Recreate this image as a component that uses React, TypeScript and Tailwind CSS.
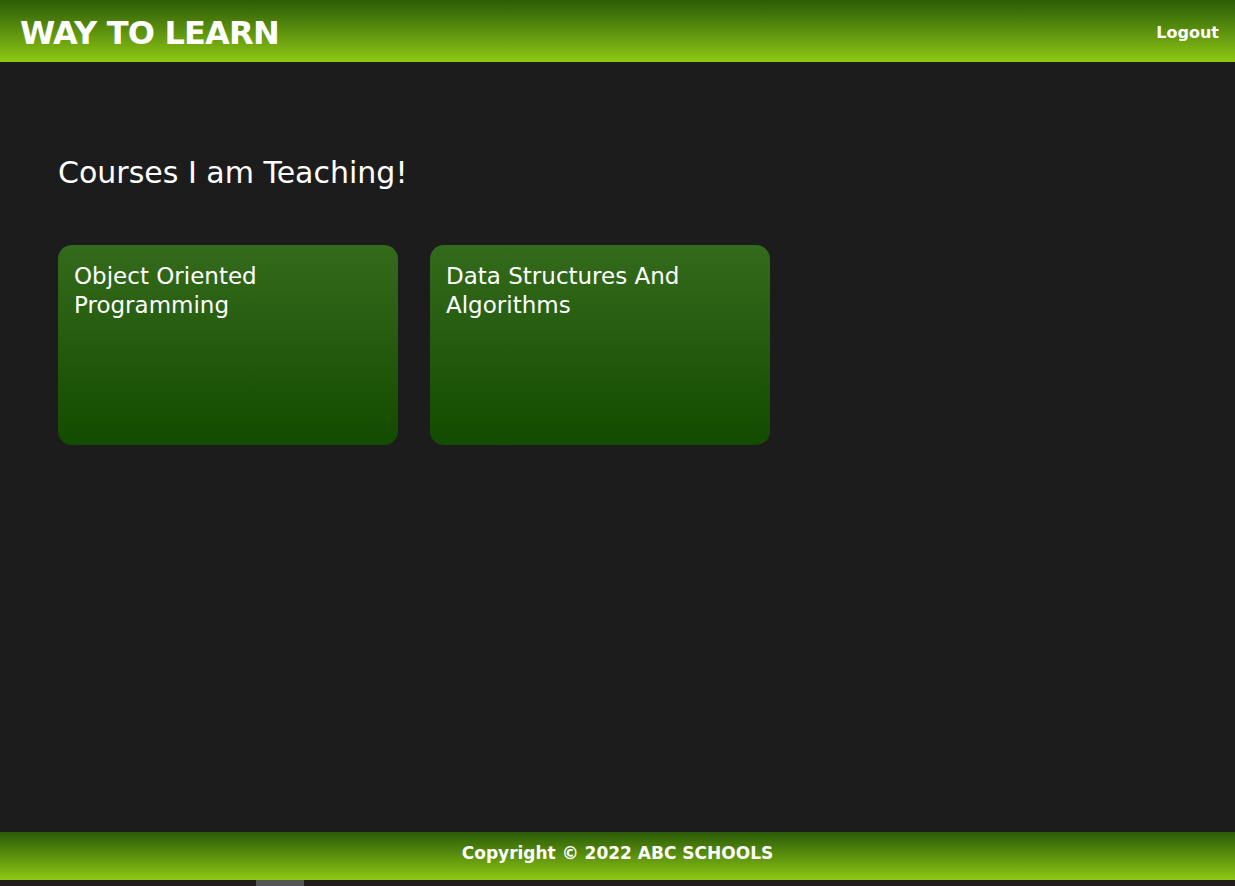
export default function App() {
    const courses = ["Object Oriented Programming", "Data Structures And Algorithms"];

    return (
        <div
            className="h-screen flex flex-col bg-[#1c1c1c] text-white"
            style={{ fontFamily: '"Comic Sans MS", "DejaVu Sans", sans-serif' }}
        >
            <header className="h-[62px] shrink-0 flex items-center justify-between pl-[20px] pr-[16px] pt-[3px] bg-gradient-to-b from-[#2b5c08] to-[#8fc914]">
                <h1 className="text-[32px] font-bold tracking-tight leading-none">WAY TO LEARN</h1>
                <button className="text-[16px] font-bold">Logout</button>
            </header>

            <main className="flex-1 px-[58px] pt-[96px]">
                <h2 className="text-[30px] leading-[30px] mb-[57px]">Courses I am Teaching!</h2>
                <div className="flex gap-[32px]">
                    {courses.map((c) => (
                        <div
                            key={c}
                            className="w-[340px] h-[200px] rounded-[14px] px-[16px] pt-[17px] bg-gradient-to-b from-[#346a1b] to-[#124c00]"
                        >
                            <p className="text-[23px] leading-[29px] pr-[60px]">{c}</p>
                        </div>
                    ))}
                </div>
            </main>

            <footer className="h-[48px] shrink-0 flex items-center justify-center bg-gradient-to-b from-[#2b5c08] to-[#8fc914]">
                <p className="text-[17px] font-bold -mt-[4px]">Copyright © 2022 ABC SCHOOLS</p>
            </footer>
            <div className="h-[6px] shrink-0 bg-[#221c1c] flex">
                <div className="ml-[256px] w-[48px] bg-[#555]" />
            </div>
        </div>
    );
}
